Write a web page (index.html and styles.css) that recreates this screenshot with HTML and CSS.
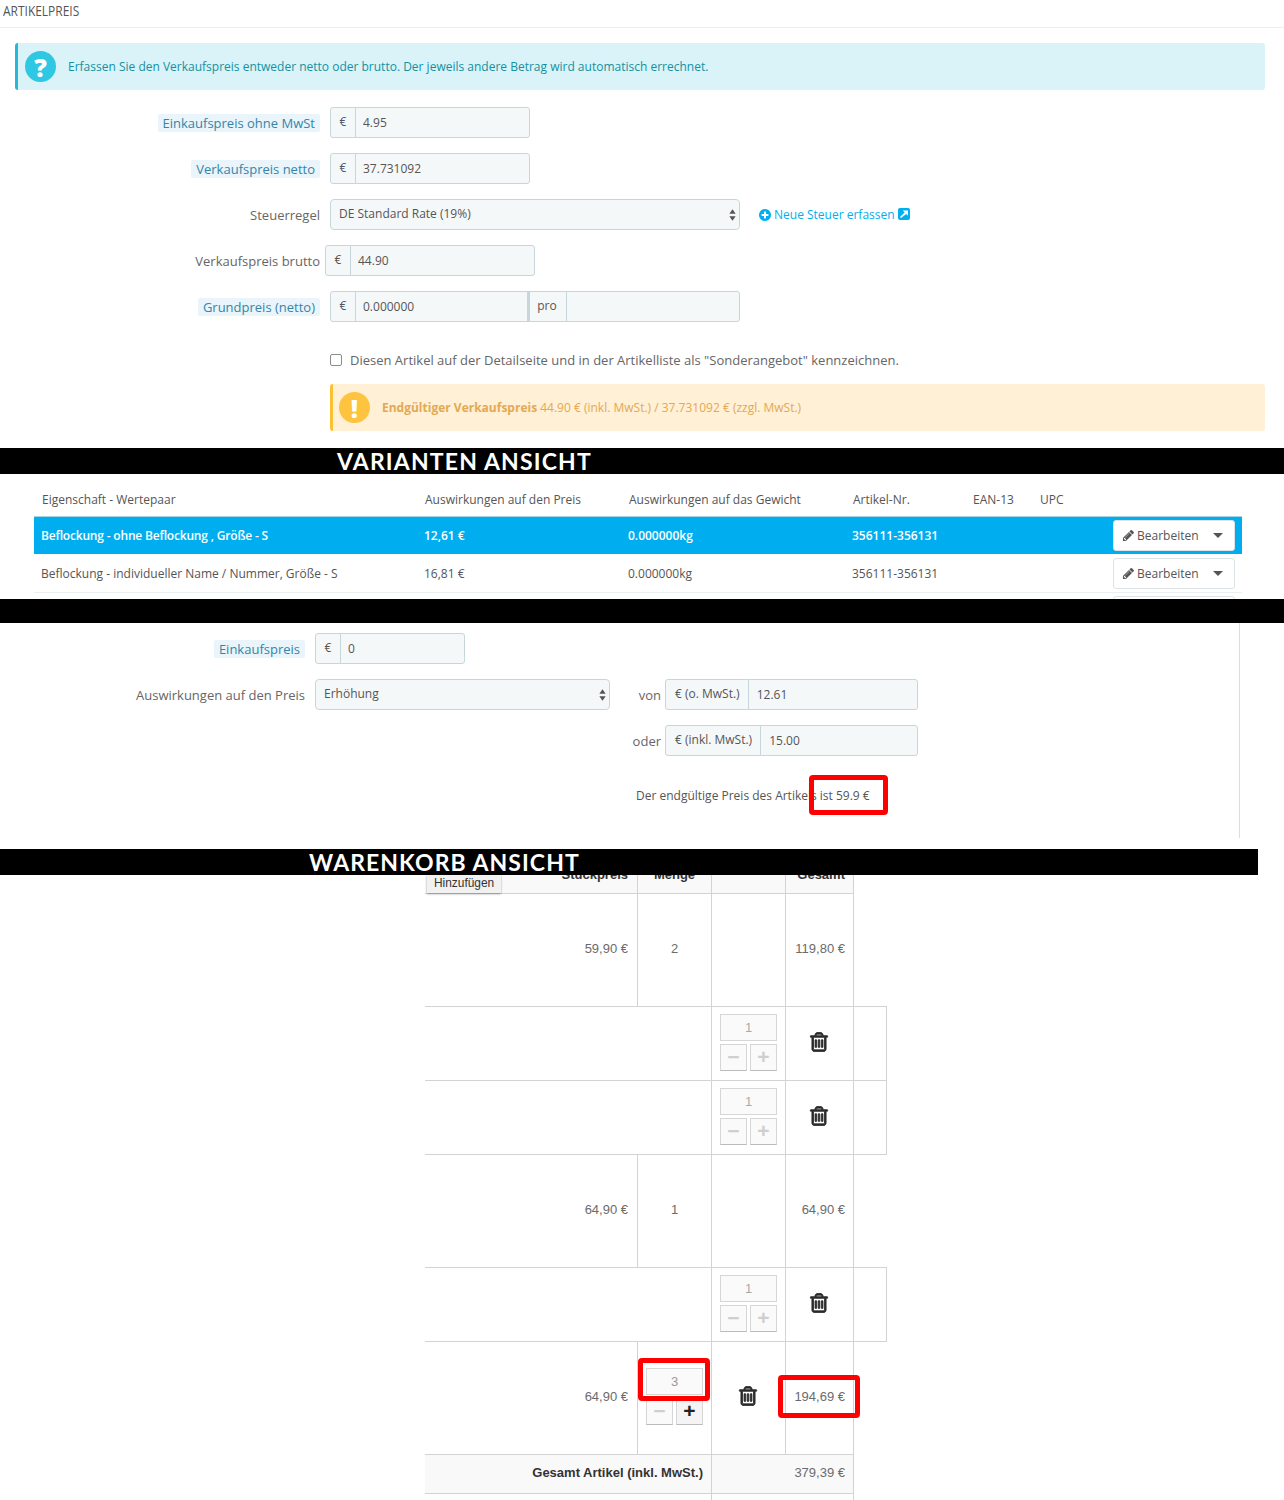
FILE: index.html
```html
<!DOCTYPE html>
<html>
<head>
    <meta charset="utf-8">
    <title>Artikelpreis</title>
    <link rel="stylesheet" href="styles.css">
</head>
<body>
    <svg class="icon-defs" width="0" height="0">
        <symbol id="i-trash" viewBox="0 0 1792 1792"><path d="M704 736v576q0 14-9 23t-23 9h-64q-14 0-23-9t-9-23v-576q0-14 9-23t23-9h64q14 0 23 9t9 23zm256 0v576q0 14-9 23t-23 9h-64q-14 0-23-9t-9-23v-576q0-14 9-23t23-9h64q14 0 23 9t9 23zm256 0v576q0 14-9 23t-23 9h-64q-14 0-23-9t-9-23v-576q0-14 9-23t23-9h64q14 0 23 9t9 23zm128 724v-948h-896v948q0 22 7 40.5t14.5 27 10.5 8.5h832q3 0 10.5-8.5t14.5-27 7-40.5zm-672-1076h448l-48-117q-7-9-17-11h-317q-10 2-17 11zm928 32v64q0 14-9 23t-23 9h-96v948q0 83-47 143.5t-113 60.5h-832q-66 0-113-58.5t-47-141.5v-952h-96q-14 0-23-9t-9-23v-64q0-14 9-23t23-9h309l70-167q15-37 54-63t79-26h320q40 0 79 26t54 63l70 167h309q14 0 23 9t9 23z"/></symbol>
        <symbol id="i-pencil" viewBox="0 0 1792 1792"><path d="M491 1536l91-91-235-235-91 91v107h128v128h107zm523-928q0-22-22-22-10 0-17 7l-542 542q-7 7-7 17 0 22 22 22 10 0 17-7l542-542q7-7 7-17zm-54-192l416 416-832 832h-416v-416zm683 96q0 53-37 90l-166 166-416-416 166-165q36-38 90-38 53 0 91 38l235 234q37 39 37 91z"/></symbol>
        <symbol id="i-updown" viewBox="0 0 8 13"><path d="M4 0l3.600 5.200H.4zM4 13L.4 7.800h7.200z"/></symbol>
    </svg>

    <section class="price-panel">
        <div class="panel-head"><span>ARTIKELPREIS</span></div>

        <div class="alert alert-info">
            <span class="alert-icon">?</span>
            <span>Erfassen Sie den Verkaufspreis entweder netto oder brutto. Der jeweils andere Betrag wird automatisch errechnet.</span>
        </div>

        <div class="form-row">
            <div class="row-label"><span class="hint">Einkaufspreis ohne MwSt</span></div>
            <div class="input-group w-200">
                <span class="addon">€</span>
                <input class="field" value="4.95">
            </div>
        </div>
        <div class="form-row">
            <div class="row-label"><span class="hint">Verkaufspreis netto</span></div>
            <div class="input-group w-200">
                <span class="addon">€</span>
                <input class="field" value="37.731092">
            </div>
        </div>
        <div class="form-row">
            <div class="row-label"><span class="plain">Steuerregel</span></div>
            <div class="select-box w-410">
                <span>DE Standard Rate (19%)</span>
                <svg class="updown"><use href="#i-updown"/></svg>
            </div>
            <a class="new-tax">
                <svg class="plus-circle" viewBox="0 0 1792 1792"><path d="M1344 960v-128q0-26-19-45t-45-19h-256v-256q0-26-19-45t-45-19h-128q-26 0-45 19t-19 45v256h-256q-26 0-45 19t-19 45v128q0 26 19 45t45 19h256v256q0 26 19 45t45 19h128q26 0 45-19t19-45v-256h256q26 0 45-19t19-45zm320-64q0 209-103 385.5t-279.5 279.5-385.5 103-385.5-103-279.5-279.5-103-385.5 103-385.5 279.5-279.5 385.500-103 385.500 103 279.500 279.500 103 385.500z"/></svg>
                Neue Steuer erfassen
                <svg class="ext-link" viewBox="0 0 12 12"><rect width="12" height="12" rx="2"/><path d="M3 10l-1-1 4.600-4.600L4.800 2.600H10v5.200L8.200 6z" fill="#fff"/></svg>
            </a>
        </div>
        <div class="form-row row-tight">
            <div class="row-label"><span class="plain">Verkaufspreis brutto</span></div>
            <div class="input-group w-210">
                <span class="addon">€</span>
                <input class="field" value="44.90">
            </div>
        </div>
        <div class="form-row">
            <div class="row-label"><span class="hint">Grundpreis (netto)</span></div>
            <div class="input-group w-410">
                <span class="addon">€</span>
                <input class="field field-base" value="0.000000">
                <span class="addon addon-pro">pro</span>
                <input class="field">
            </div>
        </div>

        <label class="special-row">
            <input type="checkbox" class="check">
            <span>Diesen Artikel auf der Detailseite und in der Artikelliste als "Sonderangebot" kennzeichnen.</span>
        </label>

        <div class="alert alert-warn">
            <span class="alert-icon">!</span>
            <span><strong>Endgültiger Verkaufspreis</strong> 44.90 € (inkl. MwSt.) / 37.731092 € (zzgl. MwSt.)</span>
        </div>
    </section>

    <div class="black-bar bar-variants">VARIANTEN ANSICHT</div>

    <section class="variants">
        <table class="variant-table">
            <colgroup>
                <col class="c-name"><col class="c-price"><col class="c-weight"><col class="c-ref"><col class="c-ean"><col>
            </colgroup>
            <thead>
                <tr>
                    <th>Eigenschaft - Wertepaar</th>
                    <th>Auswirkungen auf den Preis</th>
                    <th>Auswirkungen auf das Gewicht</th>
                    <th>Artikel-Nr.</th>
                    <th>EAN-13</th>
                    <th>UPC</th>
                </tr>
            </thead>
            <tbody>
                <tr class="selected">
                    <td class="name-cell">Beflockung - ohne Beflockung , Größe - S</td>
                    <td>12,61 €</td>
                    <td>0.000000kg</td>
                    <td>356111-356131</td>
                    <td></td>
                    <td class="actions"><span class="edit-btn"><svg class="pencil"><use href="#i-pencil"/></svg>Bearbeiten<i class="caret"></i></span></td>
                </tr>
                <tr>
                    <td>Beflockung - individueller Name / Nummer, Größe - S</td>
                    <td>16,81 €</td>
                    <td>0.000000kg</td>
                    <td>356111-356131</td>
                    <td></td>
                    <td class="actions"><span class="edit-btn"><svg class="pencil"><use href="#i-pencil"/></svg>Bearbeiten<i class="caret"></i></span></td>
                </tr>
                <tr>
                    <td></td><td></td><td></td><td></td><td></td>
                    <td class="actions"><span class="edit-btn"></span></td>
                </tr>
            </tbody>
        </table>
    </section>

    <div class="black-bar bar-empty"></div>

    <section class="impact">
        <div class="impact-row">
            <div class="impact-label"><span class="hint">Einkaufspreis</span></div>
            <div class="input-group w-150">
                <span class="addon">€</span>
                <input class="field" value="0">
            </div>
        </div>
        <div class="impact-row">
            <div class="impact-label"><span class="plain">Auswirkungen auf den Preis</span></div>
            <div class="select-box w-295">
                <span>Erhöhung</span>
                <svg class="updown"><use href="#i-updown"/></svg>
            </div>
            <div class="sub-label">von</div>
            <div class="input-group w-253">
                <span class="addon addon-text">€ (o. MwSt.)</span>
                <input class="field" value="12.61">
            </div>
        </div>
        <div class="impact-row row-offset">
            <div class="sub-label">oder</div>
            <div class="input-group w-253">
                <span class="addon addon-text">€ (inkl. MwSt.)</span>
                <input class="field" value="15.00">
            </div>
        </div>
        <div class="final-price">
            Der endgültige Preis des Artikels ist 59.9 €
            <div class="red-box box-final"></div>
        </div>
    </section>

    <div class="black-bar bar-cart">WARENKORB ANSICHT</div>

    <section class="cart">
        <div class="tooltip">Hinzufügen</div>

        <div class="cart-row cart-head">
            <div class="cell cell-right"><span>Stückpreis</span></div>
            <div class="cell cell-center"><span>Menge</span></div>
            <div class="cell"></div>
            <div class="cell cell-right"><span>Gesamt</span></div>
        </div>

        <div class="cart-row">
            <div class="cell cell-right">59,90 €</div>
            <div class="cell cell-center">2</div>
            <div class="cell"></div>
            <div class="cell cell-right">119,80 €</div>
        </div>

        <div class="cart-sub">
            <div class="cell"></div>
            <div class="cell cell-qty">
                <div class="qty-box">1</div>
                <div class="qty-btns"><span class="qty-btn">−</span><span class="qty-btn">+</span></div>
            </div>
            <div class="cell cell-center"><svg class="trash"><use href="#i-trash"/></svg></div>
            <div class="cell"></div>
        </div>

        <div class="cart-sub">
            <div class="cell"></div>
            <div class="cell cell-qty">
                <div class="qty-box">1</div>
                <div class="qty-btns"><span class="qty-btn">−</span><span class="qty-btn">+</span></div>
            </div>
            <div class="cell cell-center"><svg class="trash"><use href="#i-trash"/></svg></div>
            <div class="cell"></div>
        </div>

        <div class="cart-row">
            <div class="cell cell-right">64,90 €</div>
            <div class="cell cell-center">1</div>
            <div class="cell"></div>
            <div class="cell cell-right">64,90 €</div>
        </div>

        <div class="cart-sub">
            <div class="cell"></div>
            <div class="cell cell-qty">
                <div class="qty-box">1</div>
                <div class="qty-btns"><span class="qty-btn">−</span><span class="qty-btn">+</span></div>
            </div>
            <div class="cell cell-center"><svg class="trash"><use href="#i-trash"/></svg></div>
            <div class="cell"></div>
        </div>

        <div class="cart-row">
            <div class="cell cell-right">64,90 €</div>
            <div class="cell cell-qty cell-qty-mid">
                <div class="qty-box qty-dark">3</div>
                <div class="qty-btns"><span class="qty-btn">−</span><span class="qty-btn qty-active">+</span></div>
            </div>
            <div class="cell cell-center"><svg class="trash"><use href="#i-trash"/></svg></div>
            <div class="cell cell-right">194,69 €</div>
        </div>

        <div class="cart-total">
            <div class="cell cell-right total-label">Gesamt Artikel (inkl. MwSt.)</div>
            <div class="cell cell-right">379,39 €</div>
        </div>
        <div class="cart-total cart-next">
            <div class="cell"></div>
            <div class="cell"></div>
        </div>

        <div class="red-box box-qty"></div>
        <div class="red-box box-total"></div>
    </section>
</body>
</html>
```

FILE: styles.css
```css
* {
    box-sizing: border-box;
}

html, body {
    margin: 0;
    padding: 0;
    height: 1500px;
    overflow: hidden;
}

body {
    font-family: 'Open Sans', sans-serif;
    font-size: 12px;
    color: #555;
    background: #fff;
}

.icon-defs {
    position: absolute;
}

/* artikelpreis */
.price-panel {
    height: 448px;
}

.panel-head {
    height: 28px;
    padding: 2px 0 0 3px;
    line-height: 17px;
    color: #555;
    border-bottom: 1px solid #eee;
}

.panel-head span {
    display: inline-block;
    font-size: 14px;
    transform: scaleX(0.855);
    transform-origin: left center;
}

.alert {
    display: flex;
    align-items: center;
    height: 47px;
    border-left: 3px solid;
    border-radius: 3px;
}

.alert-icon {
    flex: none;
    display: flex;
    align-items: center;
    justify-content: center;
    width: 31px;
    height: 31px;
    margin: 0 12px 0 6px;
    border-radius: 50%;
    color: #fff;
    font-size: 25px;
    font-weight: 800;
}

.alert-info {
    margin: 15px 19px 17px 15px;
    border-color: #25b9d7;
    background: #d9f3f9;
    color: #14919f;
}

.alert-info .alert-icon {
    margin-left: 7px;
    background: #2fc8e4;
}

.alert-warn {
    margin: 0 19px 0 330px;
    border-color: #fcc030;
    background: #fff0d6;
    color: #e3a953;
}

.alert-warn .alert-icon {
    background: #fec440;
}

.form-row {
    display: flex;
    align-items: center;
    height: 31px;
    margin-bottom: 15px;
}

.row-label {
    flex: none;
    width: 320px;
    margin-right: 10px;
    text-align: right;
}

.row-tight .row-label {
    margin-right: 5px;
}

.hint {
    display: inline-block;
    padding: 0 5px;
    line-height: 18px;
    font-size: 13px;
    color: #3584a8;
    background: #e9f5fb;
    border-radius: 2px;
}

.plain {
    font-size: 13px;
    color: #666;
}

.input-group {
    display: flex;
    height: 31px;
    flex: none;
}

.w-150 { width: 150px; }
.w-200 { width: 200px; }
.w-210 { width: 210px; }
.w-253 { width: 253px; }
.w-295 { width: 295px; }
.w-410 { width: 410px; }

.addon {
    flex: none;
    width: 26px;
    padding-bottom: 3px;
    display: flex;
    align-items: center;
    justify-content: center;
    background: #f5f8f9;
    border: 1px solid #c7d6db;
    border-radius: 3px 0 0 3px;
    color: #555;
}

.addon-text {
    width: auto;
    padding: 0 8px 3px 9px;
}

.addon-pro {
    width: 39px;
    padding-right: 2px;
    border-radius: 0;
    border-left-width: 2px;
}

.field {
    flex: 1;
    min-width: 0;
    height: 31px;
    margin: 0 0 0 -1px;
    padding: 0 7px;
    font: inherit;
    color: #555;
    background: #f5f8f9;
    border: 1px solid #c7d6db;
    border-radius: 0 3px 3px 0;
    outline: none;
}

.addon-text + .field {
    padding-left: 8px;
}

.field-base {
    flex: none;
    width: 173px;
    border-radius: 0;
}

.select-box {
    display: flex;
    flex: none;
    align-items: center;
    justify-content: space-between;
    height: 31px;
    padding: 0 3px 3px 8px;
    background: #f5f8f9;
    border: 1px solid #c7d6db;
    border-radius: 4px;
}

.updown {
    width: 7px;
    height: 12px;
    margin: 3px 0 0;
    fill: #555;
}

.new-tax {
    display: flex;
    align-items: center;
    gap: 2px;
    margin-left: 18px;
    color: #00aff0;
}

.plus-circle {
    width: 14px;
    height: 14px;
    fill: #00aff0;
}

.ext-link {
    width: 12px;
    height: 12px;
    margin: -2px 0 0 1px;
    fill: #00aff0;
}

.special-row {
    display: flex;
    align-items: center;
    height: 45px;
    margin-bottom: 2px;
    padding-left: 330px;
    font-size: 13px;
    color: #666;
}

.check {
    appearance: none;
    width: 12px;
    height: 12px;
    margin: 0 8px 0 0;
    background: #fff;
    border: 1px solid #8a8a8a;
    border-radius: 2px;
}

/* black bars */
.black-bar {
    background: #000;
    color: #fff;
    font-family: 'Lato', sans-serif;
    font-weight: 700;
    font-size: 23px;
    line-height: 26px;
    height: 26px;
    letter-spacing: 1.15px;
    white-space: nowrap;
}

.bar-variants {
    padding-left: 337px;
}

.bar-empty {
    height: 24px;
}

.bar-cart {
    width: 1258px;
    padding-left: 309px;
    letter-spacing: 1.05px;
}

/* varianten */
.variants {
    height: 125px;
    overflow: hidden;
    padding-left: 34px;
}

.variant-table {
    width: 1208px;
    table-layout: fixed;
    border-collapse: collapse;
}

.c-name { width: 383px; }
.c-price { width: 204px; }
.c-weight { width: 224px; }
.c-ref { width: 120px; }
.c-ean { width: 67px; }

.variant-table th {
    height: 42px;
    padding: 10px 0 0 8px;
    text-align: left;
    font-weight: 400;
    color: #555;
    border-bottom: 1px solid #a9d6e5;
}

.variant-table td {
    height: 38px;
    padding: 0 0 0 7px;
    border-bottom: 1px solid #eaf0f2;
    white-space: nowrap;
}

.variant-table .selected td {
    background: #00aeef;
    color: #fff;
    font-weight: 600;
    border-bottom: 1px solid #fff;
}

.variant-table .name-cell {
    letter-spacing: -0.18px;
}

.variant-table .actions {
    padding: 0 7px 0 0;
    text-align: right;
}

.edit-btn {
    display: inline-flex;
    align-items: center;
    width: 122px;
    height: 31px;
    padding-left: 8px;
    background: #fff;
    color: #555;
    font-weight: 400;
    border: 1px solid #dde3e6;
    border-radius: 3px;
    vertical-align: middle;
}

.variant-table .selected .edit-btn {
    font-weight: 400;
    color: #555;
}

.pencil {
    width: 13px;
    height: 13px;
    margin-right: 2px;
    fill: #555;
}

.caret {
    width: 0;
    height: 0;
    margin-left: auto;
    margin-right: 11px;
    border-top: 5px solid #555;
    border-left: 5px solid transparent;
    border-right: 5px solid transparent;
}

/* auswirkungen */
.impact {
    width: 1240px;
    height: 215px;
    margin-bottom: 11px;
    padding-top: 10px;
    border-right: 1px solid #ddd;
}

.impact-row {
    display: flex;
    align-items: center;
    height: 31px;
    margin-bottom: 15px;
}

.impact-label {
    flex: none;
    width: 305px;
    margin-right: 10px;
    text-align: right;
}

.sub-label {
    flex: none;
    width: 51px;
    margin-right: 4px;
    text-align: right;
    font-size: 13px;
    color: #666;
}

.row-offset {
    padding-left: 610px;
}

.final-price {
    position: relative;
    height: 48px;
    padding-left: 636px;
    line-height: 50px;
    white-space: nowrap;
}

.red-box {
    position: absolute;
    border: 5px solid #f00;
    border-radius: 4px;
}

.box-final {
    left: 809px;
    top: 4px;
    width: 79px;
    height: 40px;
}

/* warenkorb */
.cart {
    position: relative;
    height: 625px;
    padding-left: 425px;
    font-family: 'Liberation Sans', sans-serif;
    font-size: 13px;
    color: #6b6b6b;
}

.tooltip {
    position: absolute;
    left: 427px;
    top: 0;
    width: 74px;
    height: 18px;
    padding-left: 7px;
    line-height: 16px;
    font-size: 11.9px;
    color: #333;
    background: #f1f1f1;
    box-shadow: 0 1px 2px rgba(0, 0, 0, 0.35);
}

.cart-row {
    display: grid;
    grid-template-columns: 213px 74px 74px 68px;
    width: 429px;
    height: 113px;
    border-top: 1px solid #d3d3d3;
}

.cart-row .cell:first-child {
    padding-right: 9px;
}

.cart-head {
    height: 18px;
    border-top: none;
    background: #f9f9f9;
    font-weight: 700;
    color: #333;
}

.cart-head .cell {
    overflow: hidden;
    align-items: flex-start;
    padding-bottom: 0;
}

.cart-head span {
    margin-top: -8px;
    line-height: 15px;
}

.cart-sub {
    display: grid;
    grid-template-columns: 287px 74px 68px 33px;
    width: 462px;
    height: 75px;
    margin-bottom: -1px;
    border-top: 1px solid #d3d3d3;
    border-bottom: 1px solid #d3d3d3;
}

.cell {
    display: flex;
    align-items: center;
    padding-bottom: 4px;
    border-right: 1px solid #d3d3d3;
}

.cell-right {
    justify-content: flex-end;
    padding-right: 8px;
}

.cell-center {
    justify-content: center;
}

.cell-qty {
    display: block;
    padding: 7px 0 0 8px;
}

.cell-qty-mid {
    padding-top: 26px;
}

.qty-box {
    width: 57px;
    height: 27px;
    text-align: center;
    line-height: 25px;
    color: #aaa;
    background: #fafafa;
    border: 1px solid #d6d6d6;
}

.qty-dark {
    color: #999;
}

.qty-btns {
    display: flex;
    gap: 3px;
    margin-top: 3px;
}

.qty-btn {
    width: 27px;
    height: 27px;
    text-align: center;
    line-height: 24px;
    font-size: 21px;
    font-weight: 700;
    color: #cfcfcf;
    background: #fafafa;
    border: 1px solid #d6d6d6;
    border-bottom-color: #bbb;
}

.qty-active {
    color: #222;
    background: #f4f4f4;
}

.trash {
    width: 22px;
    height: 22px;
    margin-right: 2px;
    fill: #2b2b2b;
    stroke: #2b2b2b;
    stroke-width: 70px;
}

.cart-total {
    display: grid;
    grid-template-columns: 287px 142px;
    width: 429px;
    height: 39px;
    background: #f9f9f9;
    border-top: 1px solid #d3d3d3;
}

.total-label {
    font-weight: 700;
    color: #333;
}

.cart-next {
    height: 10px;
    background: #fff;
}

.box-qty {
    left: 638px;
    top: 483px;
    width: 72px;
    height: 43px;
}

.box-total {
    left: 778px;
    top: 500px;
    width: 82px;
    height: 43px;
}
```
